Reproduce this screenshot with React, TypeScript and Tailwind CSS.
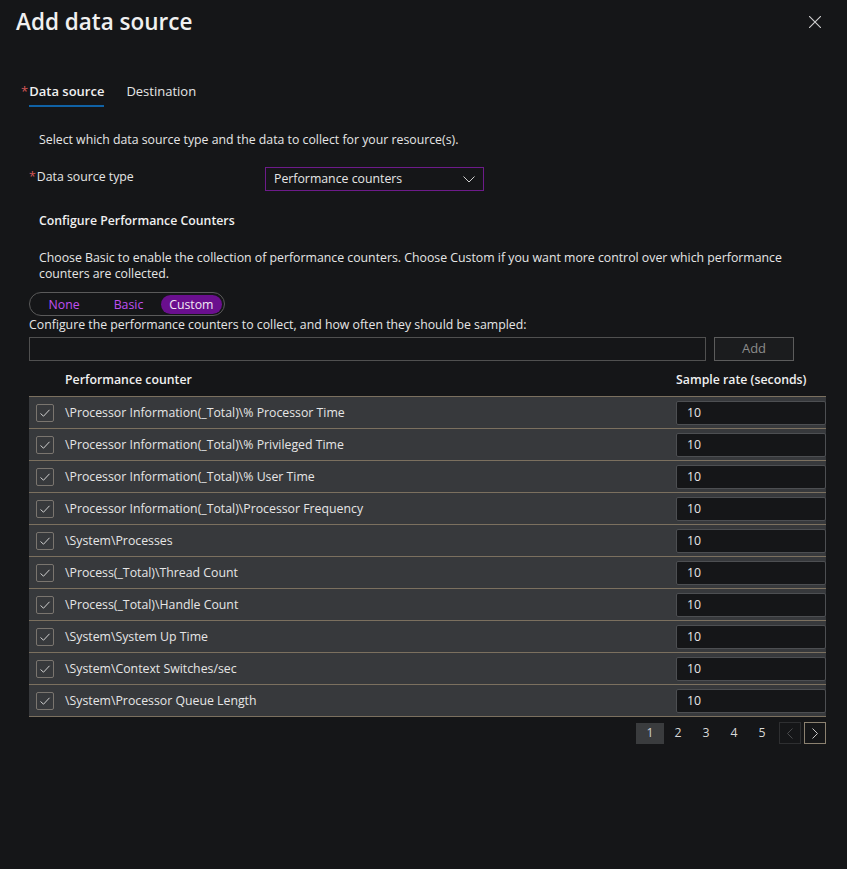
import { useState } from "react";

const counters = [
  "\\Processor Information(_Total)\\% Processor Time",
  "\\Processor Information(_Total)\\% Privileged Time",
  "\\Processor Information(_Total)\\% User Time",
  "\\Processor Information(_Total)\\Processor Frequency",
  "\\System\\Processes",
  "\\Process(_Total)\\Thread Count",
  "\\Process(_Total)\\Handle Count",
  "\\System\\System Up Time",
  "\\System\\Context Switches/sec",
  "\\System\\Processor Queue Length",
];

const CheckBox = () => (
  <span className="flex h-[18px] w-[18px] items-center justify-center rounded-[2px] border border-[#7a756f]">
    <svg width="12" height="12" viewBox="0 0 12 12" fill="none">
      <path d="M1.5 6.5 L4.5 9.2 L10.5 2.8" stroke="#d0d0d0" strokeWidth="1" />
    </svg>
  </span>
);

const App = () => {
  const [mode, setMode] = useState("Custom");

  return (
    <div className="min-h-[869px] w-full bg-[#151618] font-['Open_Sans',sans-serif] text-[12.3px] text-[#e6e6e6]">
      {/* HEADER */}
      <div className="flex items-start justify-between pl-4 pr-[26px] pt-[6px]">
        <h1 className="text-[22.5px] font-semibold leading-8 text-[#f0f0f0]">Add data source</h1>
        <button className="mt-[10px]">
          <svg width="12" height="12" viewBox="0 0 12 12">
            <path d="M0 0 L12 12 M12 0 L0 12" stroke="#cfcfcf" strokeWidth="1.1" />
          </svg>
        </button>
      </div>

      {/* TABS */}
      <div className="mt-[43px] flex gap-[22px] pl-[21px] text-[13px] leading-5">
        <div className="flex">
          <span className="mr-px text-[#d45757]">*</span>
          <span className="border-b-2 border-[#1062a5] pb-[4px] font-semibold text-[#f0f0f0]">Data source</span>
        </div>
        <span className="text-[#e6e6e6]">Destination</span>
      </div>

      <div className="px-[29px]">
        <p className="mt-[25px] pl-[10px] leading-4">
          Select which data source type and the data to collect for your resource(s).
        </p>

        <div className="mt-[19px] flex items-start">
          <label className="w-[236px] pt-[2px] leading-4">
            <span className="mr-px text-[#d45757]">*</span>Data source type
          </label>
          <div className="flex h-6 w-[219px] items-center justify-between border border-[#6d1b8a] pl-2 pr-2">
            <span className="pt-px">Performance counters</span>
            <svg width="12" height="7" viewBox="0 0 12 7" fill="none">
              <path d="M0.5 0.5 L6 6 L11.5 0.5" stroke="#d0d0d0" strokeWidth="1" />
            </svg>
          </div>
        </div>

        <h2 className="mt-[22px] pl-[10px] font-semibold leading-4 text-[#f0f0f0]">Configure Performance Counters</h2>

        <p className="mt-[21px] max-w-[761px] pl-[10px] leading-4">
          Choose Basic to enable the collection of performance counters. Choose Custom if you want more control over which performance counters are collected.
        </p>

        <div className="mt-[10px] flex h-6 w-[196px] items-center rounded-full border border-[#5a5a5a] px-[2px]">
          {["None", "Basic", "Custom"].map((m) => (
            <button
              key={m}
              onClick={() => setMode(m)}
              className={
                mode === m
                  ? "h-[19px] w-[62px] rounded-full bg-[#6a0f8e] leading-[19px] text-[#f2e8f5]"
                  : "h-[19px] w-[65px] rounded-full leading-[19px] text-[#c04ff2]"
              }
            >
              {m}
            </button>
          ))}
        </div>

        <p className="mt-px leading-4">Configure the performance counters to collect, and how often they should be sampled:</p>

        <div className="mt-[4px] flex items-center gap-2">
          <input className="h-6 w-[677px] border border-[#505050] bg-transparent outline-none" />
          <button className="h-6 w-[80px] border border-[#5c5c5c] bg-[#1b1c1e] text-[13px] text-[#8c8c8c]">Add</button>
        </div>

        {/* TABLE */}
        <div className="mt-[4px] w-[797px]">
          <div className="flex h-8 items-center border-b border-[#7b705f] font-semibold text-[#f0f0f0]">
            <span className="w-9" />
            <span className="flex-1">Performance counter</span>
            <span className="w-[150px]">Sample rate (seconds)</span>
          </div>
          {counters.map((c) => (
            <div key={c} className="flex h-8 items-center border-b border-[#7b705f] bg-[#37393c]">
              <span className="w-9 pl-[7px]">
                <CheckBox />
              </span>
              <span className="flex-1 pt-[2px]">{c}</span>
              <div className="flex h-6 w-[150px] items-center rounded-[2px] border border-[#4d4f52] bg-[#151618] pl-[10px] pt-px">
                10
              </div>
            </div>
          ))}
        </div>

        {/* PAGINATION */}
        <div className="mt-[5px] flex w-[797px] items-center justify-end gap-[3px]">
          <div className="flex">
            {[1, 2, 3, 4, 5].map((n) => (
              <span
                key={n}
                className={
                  n === 1
                    ? "flex h-[21px] w-7 items-center justify-center bg-[#3a3c3e] text-[#d0d0d0]"
                    : "flex h-[21px] w-7 items-center justify-center text-[#d8d8d8]"
                }
              >
                {n}
              </span>
            ))}
          </div>
          <span className="flex h-[22px] w-[22px] items-center justify-center border border-[#2e2f31]">
            <svg width="6" height="11" viewBox="0 0 6 11" fill="none">
              <path d="M5.5 0.5 L0.5 5.5 L5.5 10.5" stroke="#4a4b4d" strokeWidth="1" />
            </svg>
          </span>
          <span className="flex h-[22px] w-[22px] items-center justify-center border border-[#8b8170]">
            <svg width="6" height="11" viewBox="0 0 6 11" fill="none">
              <path d="M0.5 0.5 L5.5 5.5 L0.5 10.5" stroke="#c8c8c8" strokeWidth="1" />
            </svg>
          </span>
        </div>
      </div>
    </div>
  );
};

export default App;
